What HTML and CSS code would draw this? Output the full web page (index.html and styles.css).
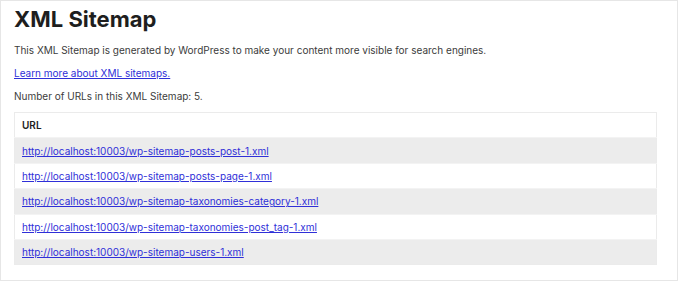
FILE: index.html
```html
<!DOCTYPE html>
<html lang="en">
<head>
  <meta charset="UTF-8" />
  <title>XML Sitemap</title>
  <link rel="stylesheet" href="styles.css">
</head>
<body>
  <div class="frame">
    <h1>XML Sitemap</h1>
    <p>This XML Sitemap is generated by WordPress to make your content more visible for search engines.</p>
    <p><a href="#">Learn more about XML sitemaps.</a></p>
    <p>Number of URLs in this XML Sitemap: 5.</p>
    <table class="sitemap">
      <thead>
        <tr><th>URL</th></tr>
      </thead>
      <tbody>
        <tr><td><a href="#">http://localhost:10003/wp-sitemap-posts-post-1.xml</a></td></tr>
        <tr><td><a href="#">http://localhost:10003/wp-sitemap-posts-page-1.xml</a></td></tr>
        <tr><td><a href="#">http://localhost:10003/wp-sitemap-taxonomies-category-1.xml</a></td></tr>
        <tr><td><a href="#">http://localhost:10003/wp-sitemap-taxonomies-post_tag-1.xml</a></td></tr>
        <tr><td><a href="#">http://localhost:10003/wp-sitemap-users-1.xml</a></td></tr>
      </tbody>
    </table>
  </div>
</body>
</html>
```

FILE: styles.css
```css
body {
  margin: 0;
  font-family: Inter, "Liberation Sans", sans-serif;
  font-size: 10px;
  color: #3c3c3c;
  background: #fff;
}
.frame {
  width: 678px;
  height: 281px;
  border: 1px solid #e6e6e6;
  padding: 0 13px;
  box-sizing: border-box;
}
h1 {
  margin: 0;
  padding-top: 5px;
  font-size: 22px;
  line-height: 26px;
  font-weight: 700;
  color: #1e1e1e;
}
p {
  margin: 0;
  line-height: 23px;
}
h1 + p { margin-top: 7px; }
a { color: #2f2fd8; }
.sitemap {
  width: 643px;
  margin-top: 4px;
  border-collapse: collapse;
  border: 1px solid #ebebeb;
}
.sitemap th {
  text-align: left;
  font-weight: 600;
  color: #1e1e1e;
  padding: 0 7px;
  height: 24.4px;
}
.sitemap td {
  padding: 0 7px;
  height: 24.4px;
  border-top: 1px solid #f3f3f3;
}
.sitemap tbody tr:nth-child(odd) td { background: #ececec; }
```
